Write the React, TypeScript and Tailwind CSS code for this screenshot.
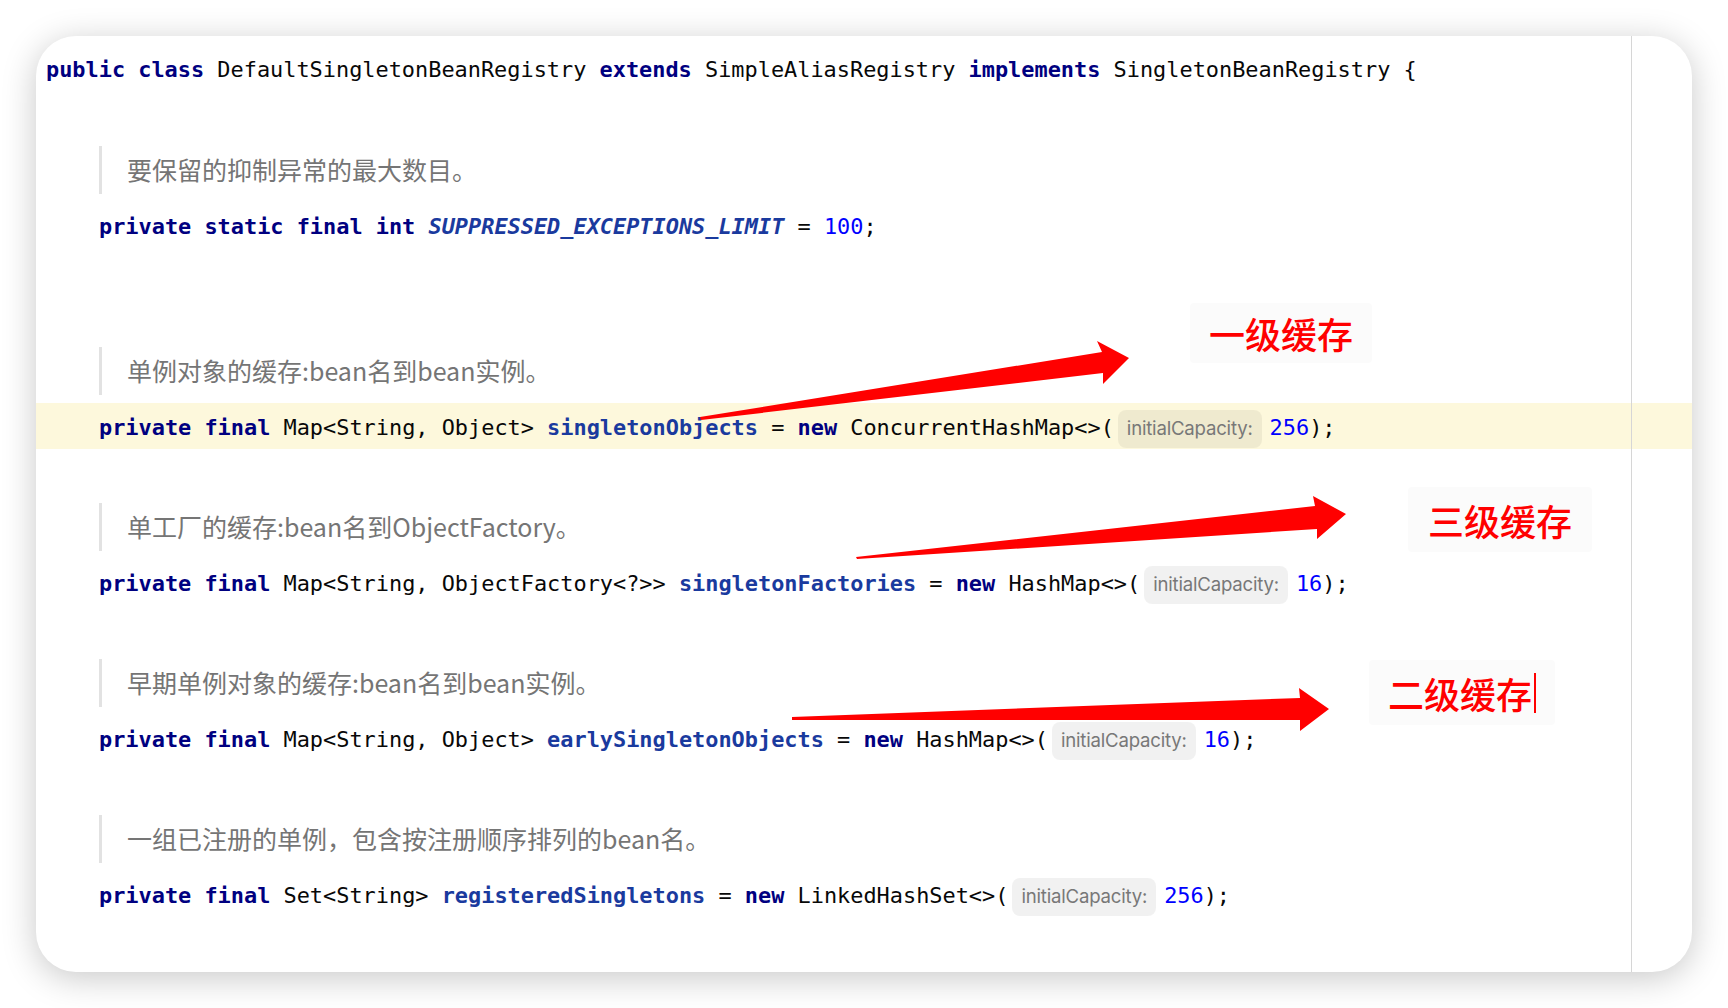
import React from "react";

type Kind = "kw" | "txt" | "field" | "const" | "num";
type Tok = [string, Kind];

const mono = "font-['DejaVu_Sans_Mono','Liberation_Mono',monospace]";

const tokClass: Record<Kind, string> = {
  kw: "text-[#000080] font-bold",
  txt: "text-[#080808]",
  field: "text-[#1a3a9e] font-bold",
  const: "text-[#1a3a9e] italic font-bold",
  num: "text-[#0000ff]",
};

const Tokens = ({ toks }: { toks: Tok[] }) => (
  <>
    {toks.map(([t, k], i) => (
      <span key={i} className={tokClass[k]}>
        {t}
      </span>
    ))}
  </>
);

const Hint = () => (
  <span className="ml-[4px] mr-[8px] -mb-[2px] inline-flex h-[38px] items-center rounded-[8px] bg-black/[0.055] px-[9px] font-['Inter','Liberation_Sans',sans-serif] text-[18.6px] font-normal tracking-[-0.2px] text-[#787878]">
    initialCapacity:
  </span>
);

type Field = {
  doc: string;
  before: Tok[];
  hint?: boolean;
  after?: Tok[];
  extraTop?: boolean;
  active?: boolean;
};

const fields: Field[] = [
  {
    doc: "要保留的抑制异常的最大数目。",
    before: [
      ["private static final int ", "kw"],
      ["SUPPRESSED_EXCEPTIONS_LIMIT", "const"],
      [" = ", "txt"],
      ["100", "num"],
      [";", "txt"],
    ],
  },
  {
    doc: "单例对象的缓存:bean名到bean实例。",
    extraTop: true,
    active: true,
    before: [
      ["private final ", "kw"],
      ["Map<String, Object> ", "txt"],
      ["singletonObjects", "field"],
      [" = ", "txt"],
      ["new ", "kw"],
      ["ConcurrentHashMap<>(", "txt"],
    ],
    hint: true,
    after: [
      ["256", "num"],
      [");", "txt"],
    ],
  },
  {
    doc: "单工厂的缓存:bean名到ObjectFactory。",
    before: [
      ["private final ", "kw"],
      ["Map<String, ObjectFactory<?>> ", "txt"],
      ["singletonFactories", "field"],
      [" = ", "txt"],
      ["new ", "kw"],
      ["HashMap<>(", "txt"],
    ],
    hint: true,
    after: [
      ["16", "num"],
      [");", "txt"],
    ],
  },
  {
    doc: "早期单例对象的缓存:bean名到bean实例。",
    before: [
      ["private final ", "kw"],
      ["Map<String, Object> ", "txt"],
      ["earlySingletonObjects", "field"],
      [" = ", "txt"],
      ["new ", "kw"],
      ["HashMap<>(", "txt"],
    ],
    hint: true,
    after: [
      ["16", "num"],
      [");", "txt"],
    ],
  },
  {
    doc: "一组已注册的单例，包含按注册顺序排列的bean名。",
    before: [
      ["private final ", "kw"],
      ["Set<String> ", "txt"],
      ["registeredSingletons", "field"],
      [" = ", "txt"],
      ["new ", "kw"],
      ["LinkedHashSet<>(", "txt"],
    ],
    hint: true,
    after: [
      ["256", "num"],
      [");", "txt"],
    ],
  },
];

const FieldBlock = ({ f }: { f: Field }) => (
  <div className={f.extraTop ? "pt-[99px]" : "pt-[54px]"}>
    <div className="ml-[63px] flex h-[48px] items-center border-l-[3px] border-[#e2e2e2] pl-[25px] font-['Noto_Sans_CJK_SC',sans-serif] text-[25px] text-[#757575]">
      {f.doc}
    </div>
    <div
      className={`mt-[8px] flex h-[46px] items-center whitespace-pre pl-[63px] pt-[4px] text-[21.9px] ${mono} ${
        f.active ? "bg-[#fdf8dc]" : ""
      }`}
    >
      <Tokens toks={f.before} />
      {f.hint && <Hint />}
      {f.after && <Tokens toks={f.after} />}
    </div>
  </div>
);

const Label = ({
  text,
  box,
  cursor,
}: {
  text: string;
  box: string;
  cursor?: boolean;
}) => (
  <div className={`absolute flex items-center justify-center rounded-[4px] bg-[#fbfbfb] ${box}`}>
    <span className="font-['Noto_Sans_CJK_SC',sans-serif] text-[36px] font-medium leading-none text-[#ff0000]">
      {text}
    </span>
    {cursor && <span className="ml-[2px] h-[40px] w-[2px] bg-[#ff0000]" />}
  </div>
);

export default function App() {
  return (
    <div className="relative h-[1008px] w-[1728px] overflow-hidden bg-white pl-[36px] pt-[36px]">
      <div className="relative h-[936px] w-[1656px] overflow-hidden rounded-[40px] bg-white pt-[10px] shadow-[0_6px_34px_rgba(0,0,0,0.22)]">
        <div className={`flex h-[46px] items-center whitespace-pre pl-[10px] pt-[3px] text-[21.9px] ${mono}`}>
          <Tokens
            toks={[
              ["public class ", "kw"],
              ["DefaultSingletonBeanRegistry ", "txt"],
              ["extends ", "kw"],
              ["SimpleAliasRegistry ", "txt"],
              ["implements ", "kw"],
              ["SingletonBeanRegistry {", "txt"],
            ]}
          />
        </div>
        {fields.map((f, i) => (
          <FieldBlock key={i} f={f} />
        ))}
        {/* right margin guide */}
        <div className="absolute bottom-0 left-[1595px] top-0 w-px bg-[#d6d6d6]" />
      </div>

      {/* annotation arrows */}
      <svg className="pointer-events-none absolute left-0 top-0" width="1728" height="1008" viewBox="0 0 1728 1008">
        <polygon fill="#ff0000" points="700,417 1102,352 1097,341 1129,358 1103,384 1103,373 701,420" />
        <polygon fill="#ff0000" points="856,557 1315,506 1313,496 1346,514 1317,539 1317,529 857,559" />
        <polygon fill="#ff0000" points="792,717 1300,698 1299,688 1329,709 1300,731 1300,720 792,720" />
      </svg>

      <Label text="一级缓存" box="left-[1190px] top-[303px] h-[60px] w-[182px]" />
      <Label text="三级缓存" box="left-[1408px] top-[487px] h-[65px] w-[184px]" />
      <Label text="二级缓存" box="left-[1369px] top-[660px] h-[65px] w-[186px]" cursor />
    </div>
  );
}
